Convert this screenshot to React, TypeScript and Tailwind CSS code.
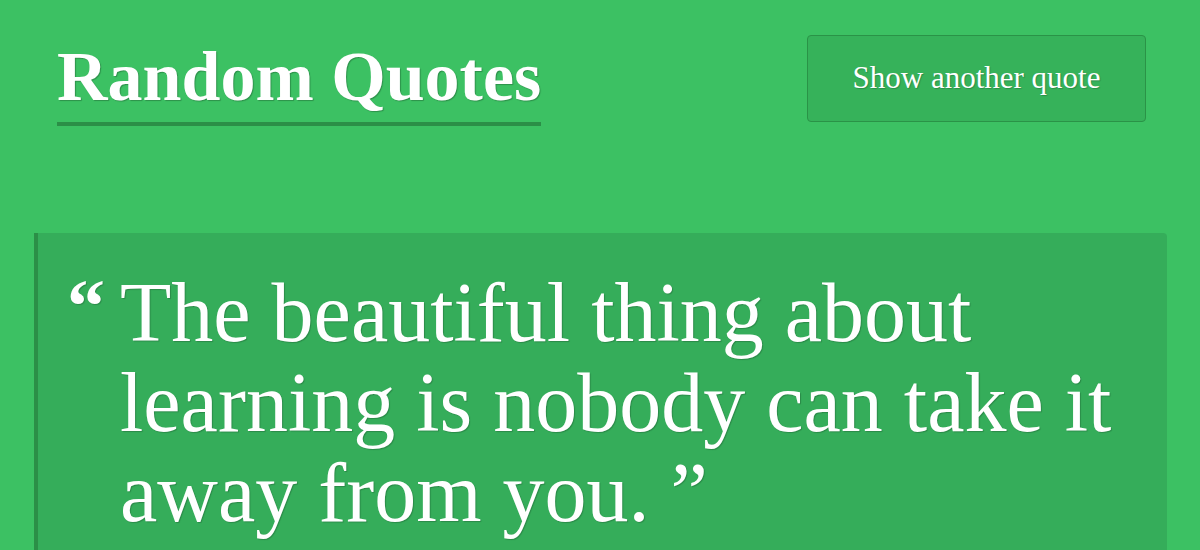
export default function App() {
  return (
    <div className="min-h-[550px] w-full bg-[#3cc163] overflow-hidden font-['Liberation_Serif',serif] text-white">
      <header className="flex items-start justify-between pl-[57px] pr-[54px] pt-[35px]">
        <h1 className="mt-[1px] border-b-4 border-[#2b8f47] pb-[4px] text-[70px] font-bold leading-[82px] [text-shadow:1px_1px_1px_rgba(0,0,0,0.25)]">
          Random Quotes
        </h1>
        <button className="h-[87px] w-[339px] rounded-[4px] border border-[#2a9347] bg-[#36b25a] text-[31px] text-white [text-shadow:1px_1px_1px_rgba(0,0,0,0.2)]">
          Show another quote
        </button>
      </header>

      <main className="ml-[34px] mr-[33px] mt-[107px]">
        <blockquote className="flex h-[330px] rounded-r-[4px] border-l-4 border-[#2b8f47] bg-[#35ad5a] pl-[29px] pt-[35px] [text-shadow:1px_1px_1px_rgba(0,0,0,0.2)]">
          <span className="w-[53px] shrink-0 pt-[8px] text-[76px] font-bold leading-[60px]">&ldquo;</span>
          <p className="pr-[50px] text-[84px] leading-[90px]">
            The beautiful thing about learning is nobody can take it away from you.&nbsp;&rdquo;
          </p>
        </blockquote>
      </main>
    </div>
  );
}
